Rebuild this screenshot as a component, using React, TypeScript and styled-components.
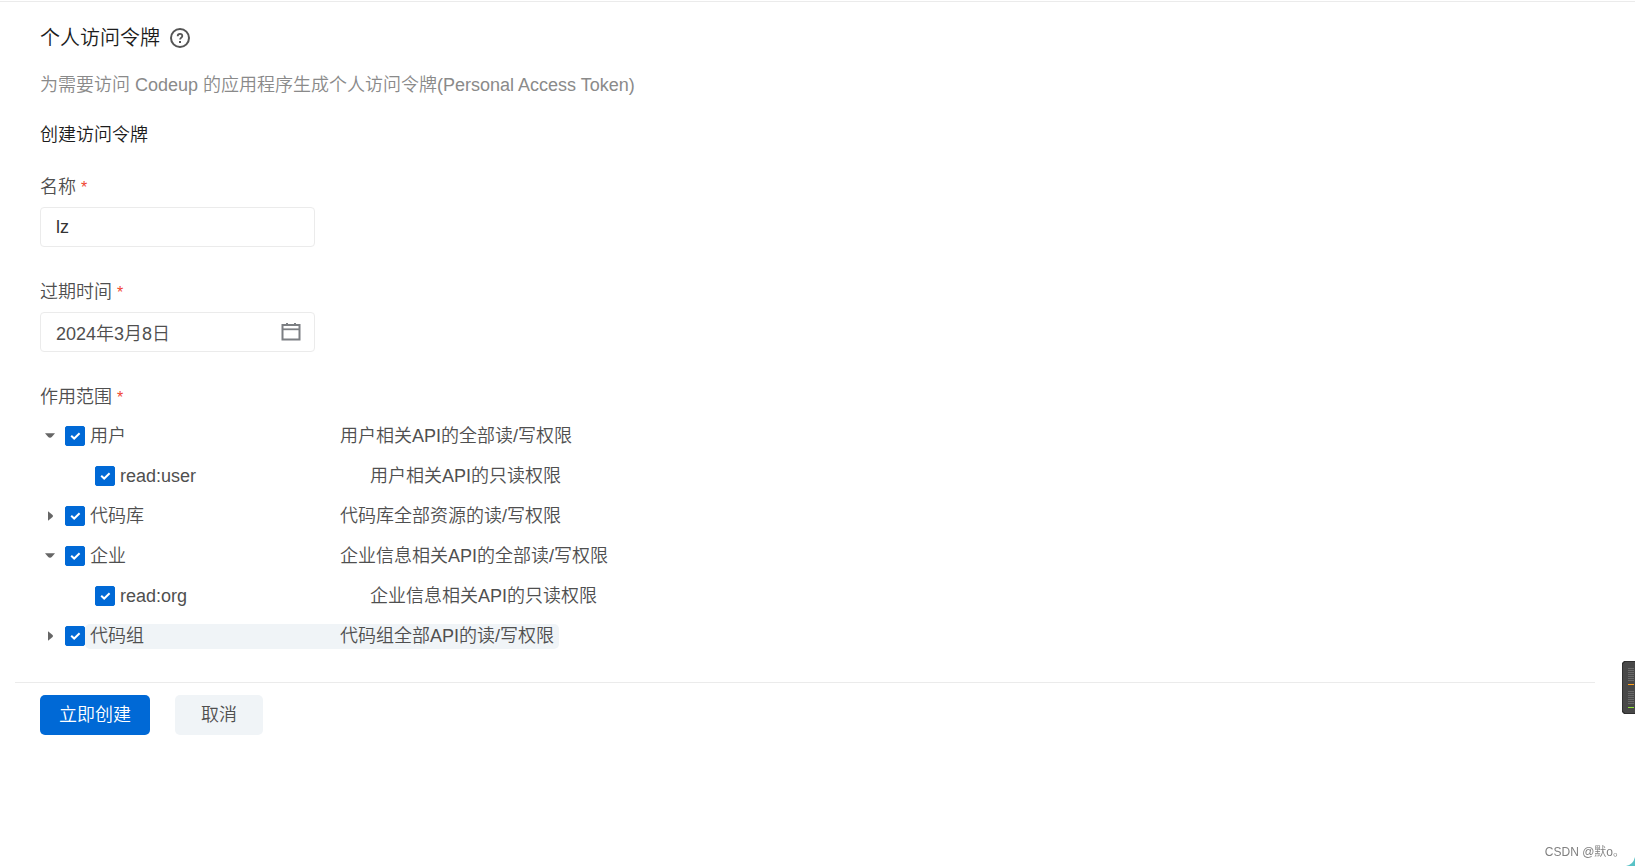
import React, { useState } from "react";
import styled, { createGlobalStyle } from "styled-components";

const color = {
  text: "#4f4f4f",
  strong: "#1c1c1c",
  muted: "#8a8a8a",
  line: "#ebebeb",
  primary: "#0069d6",
  soft: "#f0f4f7",
  danger: "#f04631",
};

const GlobalStyle = createGlobalStyle`
  * { box-sizing: border-box; }
  body {
    margin: 0;
    background: #fff;
    color: ${color.text};
    font-family: "Liberation Sans", "Noto Sans CJK SC", sans-serif;
    font-size: 18px;
    font-weight: 350;
    line-height: 24px;
  }
  button, input { font: inherit; color: inherit; }
`;

const Page = styled.main`
  margin-top: 1px;
  border-top: 1px solid ${color.line};
  padding: 21px 40px;
`;

const TitleRow = styled.header`
  display: flex;
  align-items: center;
  gap: 10px;
`;

const Title = styled.h1`
  margin: 0;
  font-size: 20px;
  font-weight: 350;
  line-height: 30px;
  color: ${color.strong};
`;

const IconButton = styled.button`
  display: flex;
  padding: 0;
  border: 0;
  background: none;
  color: #555;
  cursor: pointer;
`;

const Description = styled.p`
  margin: 20px 0 26px;
  color: ${color.muted};
`;

const SectionTitle = styled.h2`
  margin: 0 0 28px;
  font-size: 18px;
  font-weight: 350;
  color: ${color.strong};
`;

const Field = styled.div`
  margin-bottom: 33px;
`;

const Label = styled.label`
  display: block;
  margin-bottom: 8px;
`;

const Scope = styled.fieldset`
  margin: 0;
  padding: 0;
  border: 0;
`;

const Legend = styled.legend`
  padding: 0;
  margin-bottom: 7px;
`;

const Required = styled.span`
  margin-left: 5px;
  font-size: 16px;
  line-height: 16px;
  color: ${color.danger};
`;

const InputBox = styled.div`
  display: flex;
  align-items: center;
  width: 275px;
  height: 40px;
  padding: 0 13px 0 15px;
  border: 1px solid ${color.line};
  border-radius: 4px;
`;

const TextInput = styled.input<{ $dark?: boolean }>`
  flex: 1;
  min-width: 0;
  height: 100%;
  padding: 0;
  border: 0;
  outline: 0;
  background: none;
  color: ${(p) => (p.$dark ? "#333" : color.text)};
`;

const Tree = styled.ul`
  margin: 0;
  padding: 0;
  list-style: none;
`;

const Row = styled.li<{ $child?: boolean }>`
  display: flex;
  align-items: center;
  height: 40px;
  padding-left: ${(p) => (p.$child ? 30 : 0)}px;
`;

const Toggle = styled.span`
  display: flex;
  justify-content: center;
  width: 20px;
  margin-right: 5px;
`;

const CheckWrap = styled.span`
  display: grid;
  width: 20px;
  height: 20px;

  > * { grid-area: 1 / 1; }
  svg { pointer-events: none; }
`;

const CheckInput = styled.input`
  appearance: none;
  width: 20px;
  height: 20px;
  margin: 0;
  border: 1px solid #bbb;
  border-radius: 2px;
  cursor: pointer;

  &:checked {
    border-color: ${color.primary};
    background: ${color.primary};
  }
`;

const RowLabel = styled.label<{ $active?: boolean }>`
  display: flex;
  padding: 0 5px;
  line-height: 25px;
  border-radius: 5px;
  background: ${(p) => (p.$active ? color.soft : "transparent")};
  cursor: pointer;
`;

const ScopeName = styled.span`
  width: 250px;
`;

const Actions = styled.footer`
  display: flex;
  gap: 25px;
  margin: 26px 0 0 -25px;
  padding: 12px 25px;
  border-top: 1px solid ${color.line};
`;

const Button = styled.button<{ $primary?: boolean }>`
  height: 40px;
  min-width: 88px;
  padding: 0 19px;
  border: 0;
  border-radius: 5px;
  background: ${(p) => (p.$primary ? color.primary : color.soft)};
  color: ${(p) => (p.$primary ? "#fff" : color.text)};
  cursor: pointer;
`;

const Meter = styled.aside`
  position: fixed;
  top: 661px;
  right: 0;
  display: flex;
  width: 13px;
  height: 53px;
`;

const Watermark = styled.div`
  position: fixed;
  right: 10px;
  bottom: 4px;
  font-size: 12px;
  line-height: 20px;
  color: #808080;
`;

const Corner = styled.div`
  position: fixed;
  right: 0;
  bottom: 0;
  display: flex;
`;

const HelpIcon = () => (
  <svg width="20" height="20" viewBox="0 0 20 20" fill="none" stroke="currentColor">
    <circle cx="10" cy="10" r="9" strokeWidth="2" />
    <path d="M7.7 8.2C7.7 6.7 8.7 5.8 10 5.8s2.3.9 2.3 2.1c0 1.6-2.2 1.8-2.2 3.7" strokeWidth="1.8" />
    <path d="M9 13h2v2H9z" fill="currentColor" stroke="none" />
  </svg>
);

const CalendarIcon = () => (
  <svg width="20" height="20" viewBox="0 0 20 20" fill="none" stroke="#7c7f83">
    <path d="M1.5 3h17v14.6h-17z" strokeWidth="2" />
    <path d="M1 7.3h18" strokeWidth="1.8" />
    <path d="M6 1v2M14 1v2" strokeWidth="2" />
  </svg>
);

const Caret = ({ open }: { open: boolean }) => (
  <svg width="10" height="10" viewBox="0 0 10 10" fill="#666">
    {open ? <path d="M0 2.2h10L7.2 5.6Q5 8 2.8 5.6z" /> : <path d="M3 .3v9.4l4.3-3.4Q9 5 7.3 3.7z" />}
  </svg>
);

const CheckMark = () => (
  <svg width="20" height="20" viewBox="0 0 20 20" fill="none" stroke="#fff" strokeWidth="2">
    <path d="M6.2 9.7l3 2.8 5.4-5.2" />
  </svg>
);

interface Item {
  name: string;
  desc: string;
  open?: boolean;
  child?: boolean;
  active?: boolean;
}

const items: Item[] = [
  { name: "用户", desc: "用户相关API的全部读/写权限", open: true },
  { name: "read:user", desc: "用户相关API的只读权限", child: true },
  { name: "代码库", desc: "代码库全部资源的读/写权限", open: false },
  { name: "企业", desc: "企业信息相关API的全部读/写权限", open: true },
  { name: "read:org", desc: "企业信息相关API的只读权限", child: true },
  { name: "代码组", desc: "代码组全部API的读/写权限", open: false, active: true },
];

const ScopeRow = ({ item, id }: { item: Item; id: string }) => {
  const [checked, setChecked] = useState(true);
  return (
    <Row $child={item.child}>
      <Toggle>{!item.child && <IconButton type="button" aria-label={item.name}><Caret open={!!item.open} /></IconButton>}</Toggle>
      <CheckWrap>
        <CheckInput id={id} type="checkbox" checked={checked} onChange={() => setChecked(!checked)} />
        {checked && <CheckMark />}
      </CheckWrap>
      <RowLabel htmlFor={id} $active={item.active}>
        <ScopeName>{item.name}</ScopeName>
        <span>{item.desc}</span>
      </RowLabel>
    </Row>
  );
};

const bars = [0, 1, 2, 3, 4, 5, 6];

export default function App() {
  return (
    <>
      <GlobalStyle />
      <Page>
        <TitleRow>
          <Title>个人访问令牌</Title>
          <IconButton type="button" aria-label="帮助"><HelpIcon /></IconButton>
        </TitleRow>
        <Description>为需要访问 Codeup 的应用程序生成个人访问令牌(Personal Access Token)</Description>
        <SectionTitle>创建访问令牌</SectionTitle>
        <form onSubmit={(e) => e.preventDefault()}>
          <Field>
            <Label htmlFor="name">名称<Required>*</Required></Label>
            <InputBox><TextInput id="name" $dark defaultValue="lz" /></InputBox>
          </Field>
          <Field>
            <Label htmlFor="expires">过期时间<Required>*</Required></Label>
            <InputBox>
              <TextInput id="expires" defaultValue="2024年3月8日" />
              <CalendarIcon />
            </InputBox>
          </Field>
          <Scope>
            <Legend>作用范围<Required>*</Required></Legend>
            <Tree>
              {items.map((item, i) => <ScopeRow key={item.name} item={item} id={`scope-${i}`} />)}
            </Tree>
          </Scope>
          <Actions>
            <Button type="submit" $primary>立即创建</Button>
            <Button type="button">取消</Button>
          </Actions>
        </form>
      </Page>
      <Meter>
        <svg width="13" height="53" viewBox="0 0 13 53">
          <path d="M13 0H2L0 2v49l2 2h11z" fill="#2f2f2f" />
          <path d="M13 1H3L1 3v47l2 2h10z" fill="#484848" />
          {bars.map((n) => (
            <React.Fragment key={n}>
              <path d={`M6 ${7 + n * 2}h6v1H6z`} fill="#6a6a6a" />
              <path d={`M6 ${30 + n * 2}h6v1H6z`} fill="#6a6a6a" />
            </React.Fragment>
          ))}
          <path d="M6 23h6v1H6z" fill="#ff9f1a" />
          <path d="M6 46h6v1H6z" fill="#8fe03a" />
        </svg>
      </Meter>
      <Watermark>CSDN @默o。</Watermark>
      <Corner>
        <svg width="9" height="9" viewBox="0 0 9 9"><path d="M9 0v9H0Q7 8 9 0z" fill="#58c2c6" /></svg>
      </Corner>
    </>
  );
}
